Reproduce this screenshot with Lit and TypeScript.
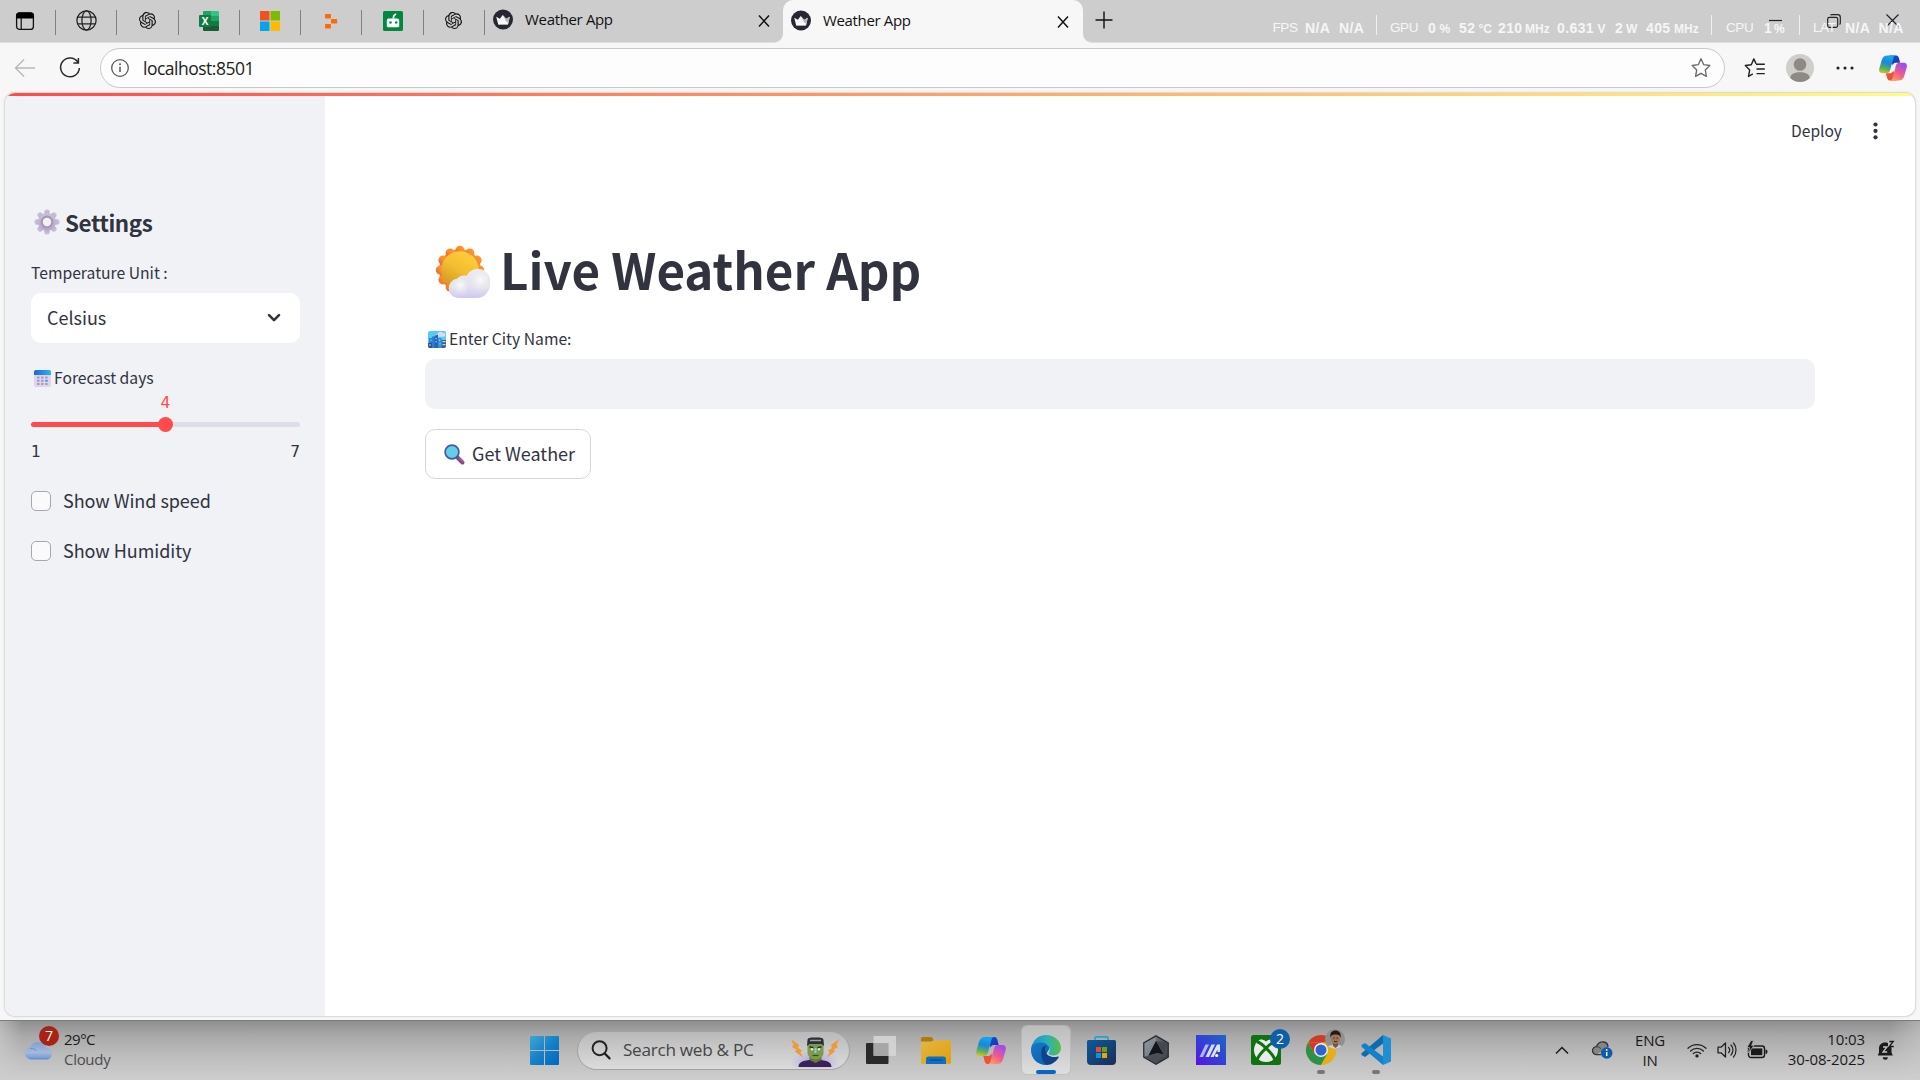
import { LitElement, html, css, svg, nothing } from "lit";
import { customElement } from "lit/decorators.js";

const icon = (w: number, h: number, body: unknown, vb = `0 0 ${w} ${h}`) =>
  html`<svg class="ico" width=${w} height=${h} viewBox=${vb} fill="none">${body}</svg>`;

const openAi = svg`<path fill="#111" d="M22.2819 9.8211a5.9847 5.9847 0 0 0-.5157-4.9108 6.0462 6.0462 0 0 0-6.5098-2.9A6.0651 6.0651 0 0 0 4.9807 4.1818a5.9847 5.9847 0 0 0-3.9977 2.9 6.0462 6.0462 0 0 0 .7427 7.0966 5.98 5.98 0 0 0 .511 4.9107 6.051 6.051 0 0 0 6.5146 2.9001A5.9847 5.9847 0 0 0 13.2599 24a6.0557 6.0557 0 0 0 5.7718-4.2058 5.9894 5.9894 0 0 0 3.9977-2.9001 6.0557 6.0557 0 0 0-.7475-7.0729zm-9.022 12.6081a4.4755 4.4755 0 0 1-2.8764-1.0408l.1419-.0804 4.7783-2.7582a.7948.7948 0 0 0 .3927-.6813v-6.7369l2.02 1.1686a.071.071 0 0 1 .038.052v5.5826a4.504 4.504 0 0 1-4.4945 4.4944zm-9.6607-4.1254a4.4708 4.4708 0 0 1-.5346-3.0137l.142.0852 4.783 2.7582a.7712.7712 0 0 0 .7806 0l5.8428-3.3685v2.3324a.0804.0804 0 0 1-.0332.0615L9.74 19.9502a4.4992 4.4992 0 0 1-6.1408-1.6464zM2.3408 7.8956a4.485 4.485 0 0 1 2.3655-1.9728V11.6a.7664.7664 0 0 0 .3879.6765l5.8144 3.3543-2.0201 1.1685a.0757.0757 0 0 1-.071 0l-4.8303-2.7865A4.504 4.504 0 0 1 2.3408 7.872zm16.5963 3.8558L13.1038 8.364 15.1192 7.2a.0757.0757 0 0 1 .071 0l4.8303 2.7913a4.4944 4.4944 0 0 1-.6765 8.1042v-5.6772a.79.79 0 0 0-.407-.667zm2.0107-3.0231l-.142-.0852-4.7735-2.7818a.7759.7759 0 0 0-.7854 0L9.409 9.2297V6.8974a.0662.0662 0 0 1 .0284-.0615l4.8303-2.7866a4.4992 4.4992 0 0 1 6.6802 4.66zM8.3065 12.863l-2.02-1.1638a.0804.0804 0 0 1-.038-.0567V6.0742a4.4992 4.4992 0 0 1 7.3757-3.4537l-.142.0805L8.704 5.459a.7948.7948 0 0 0-.3927.6813zm1.0976-2.3654l2.602-1.4998 2.6069 1.4998v2.9994l-2.5974 1.4997-2.6067-1.4997Z"/>`;

const tabActions = icon(20, 20, svg`<rect x="1.6" y="2" width="16.8" height="16.4" rx="3" stroke="#111" stroke-width="1.3"/><path d="M1 7.6V4.6A3 3 0 0 1 4 1.6h12a3 3 0 0 1 3 3v3z" fill="#000"/><path d="M6.2 7v11" stroke="#111" stroke-width="1.2"/>`);
const globe = icon(21, 21, svg`<g stroke="#222" stroke-width="1.25"><circle cx="10.5" cy="10.5" r="9.6"/><ellipse cx="10.5" cy="10.5" rx="4.6" ry="9.6"/><path d="M1.8 7.1h17.4M1.8 13.9h17.4"/></g>`);
const gpt = icon(17, 17, openAi, "0 0 24 24");
const excel = icon(20, 20, svg`<path d="M5 0h8v6H4V1a1 1 0 0 1 1-1z" fill="#21a366"/><path d="M12 0h7a1 1 0 0 1 1 1v5h-8z" fill="#33c481"/><path d="M4 5h8v5H4z" fill="#107c41"/><path d="M12 5h8v5h-8z" fill="#21a366"/><path d="M4 10h8v5H4z" fill="#185c37"/><path d="M12 10h8v5h-8z" fill="#107c41"/><path d="M4 15h16v4a1 1 0 0 1-1 1H5a1 1 0 0 1-1-1z" fill="#185c37"/><rect y="4" width="12" height="12" rx="1" fill="#107c41"/><text x="6" y="13.6" text-anchor="middle" font-family="Open Sans, sans-serif" font-weight="700" font-size="10" fill="#fff">X</text>`);
const msLogo = icon(20, 20, svg`<path d="M0 0h9.5v9.5H0z" fill="#f25022"/><path d="M10.5 0H20v9.5h-9.5z" fill="#7fba00"/><path d="M0 10.5h9.5V20H0z" fill="#00a4ef"/><path d="M10.5 10.5H20V20h-9.5z" fill="#ffb900"/>`);
const replit = icon(14, 16, svg`<g fill="#fb6a0e"><rect x="1" y="1" width="6" height="4.4" rx=".7"/><rect x="7" y="6" width="6.2" height="4.4" rx=".7"/><rect x="1" y="11" width="6" height="4.4" rx=".7"/></g>`);
const bot = icon(20, 20, svg`<rect width="20" height="20" rx="1.6" fill="#00893e"/><path d="M5.800 7.600h8.600a1.800 1.800 0 0 1 1.800 1.800V15c0 .8-.4 1.200-1.200 1.200H5c-.8 0-1.200-.4-1.200-1.200V9.400a1.800 1.800 0 0 1 2-1.800z" fill="#fff"/><path d="M10.300 7.600c0-2.600.8-4 2.900-4.600" stroke="#fff" stroke-width="1.700"/><circle cx="7.500" cy="11.400" r="1.250" fill="#00893e"/><circle cx="13.200" cy="11.400" r="1.250" fill="#00893e"/>`);
const crown = icon(20, 21, svg`<circle cx="10" cy="10.500" r="10" fill="#262730"/><path d="M3.200 7.800l3.600 2L9.800 6l3.300 3.800 3.700-2-1.800 7.800H5.200z" fill="#f4f4f4"/><path d="M9.800 6l3.300 3.800 3.700-2L15 15.600z" fill="#b5b5ba"/><path d="M5 13h10.200l-.5 2.600H5.200z" fill="#fff" fill-opacity=".6"/>`);
const cross = icon(12, 12, svg`<path d="M1 .5l10 11M11 .5L1 11.500" stroke="#111" stroke-width="1.500"/>`);
const plus = icon(18, 18, svg`<path d="M9 .5v17M.5 9h17" stroke="#111" stroke-width="1.400"/>`);

const back = icon(22, 20, svg`<path d="M21 10H1.500M10 1.500L1.500 10l8.500 8.500" stroke="#b9b9b9" stroke-width="1.400"/>`);
const reload = icon(22, 22, svg`<path d="M18.800 5.100A9.400 9.400 0 1 0 20.400 11M19.400 1v5h-5" stroke="#2a2a2a" stroke-width="1.500"/>`);
const info = icon(20, 20, svg`<circle cx="10" cy="10" r="8.300" stroke="#5a5a5a" stroke-width="1.300"/><path d="M10 8.800v5.200" stroke="#555" stroke-width="1.500"/><circle cx="10" cy="6.300" r="1" fill="#555"/>`);
const star = icon(20, 20, svg`<path d="M10 .8l2.700 5.900 6.100.8-4.500 4.400 1.100 6.500L10 15.300l-5.400 3.100 1.100-6.500L1.200 7.500l6.100-.8z" stroke="#6a6a6a" stroke-width="1.350" stroke-linejoin="round"/>`);
const starList = icon(22, 20, svg`<path d="M12 5.600L9.800 .9 7.300 6.700l-6 .8 4.400 4.400-1.200 6.600 4.300-2.700M12 6.300h8.800M12.500 11h8.300M12.500 15.600h8.300" stroke="#222" stroke-width="1.400" stroke-linejoin="round"/>`);
const avatar = icon(28, 28, svg`<circle cx="14" cy="14" r="14" fill="#d0ceca"/><circle cx="14" cy="10.500" r="6.300" fill="#8d8985"/><path d="M4.200 24c.6-4.200 4.500-5.700 9.800-5.700s9.200 1.500 9.800 5.700A14 14 0 0 1 14 28a14 14 0 0 1-9.800-4z" fill="#8d8985"/>`);
const more = icon(18, 4, svg`<g fill="#222"><circle cx="2" cy="2" r="1.550"/><circle cx="9" cy="2" r="1.550"/><circle cx="16" cy="2" r="1.550"/></g>`);
const copilot = (id: string, w: number, h: number) => icon(w, h, svg`
  <defs>
    <linearGradient id="${id}a" x1="10" y1="2" x2="5" y2="22" gradientUnits="userSpaceOnUse"><stop stop-color="#1ba0ea"/><stop offset=".3" stop-color="#1687dd"/><stop offset=".62" stop-color="#5fae5a"/><stop offset=".95" stop-color="#f7cd15"/></linearGradient>
    <linearGradient id="${id}b" x1="26" y1="10" x2="15" y2="28" gradientUnits="userSpaceOnUse"><stop stop-color="#a34de8"/><stop offset=".5" stop-color="#ee5c8d"/><stop offset="1" stop-color="#ffa65a"/></linearGradient>
    <linearGradient id="${id}c" x1="16" y1="0" x2="21" y2="10" gradientUnits="userSpaceOnUse"><stop stop-color="#0b4ec7"/><stop offset="1" stop-color="#1a36bd"/></linearGradient>
  </defs>
  <path d="M11 0h7.500c1.500 0 2.400 1.300 2.900 3l1.300 5h-5c-1.800 0-2.400 1-2.900 2.700z" fill="url(#${id}c)"/>
  <path d="M19 27h-7.500c-1.500 0-2.400-1.300-2.900-3l-1.300-5h5c1.800 0 2.400-1 2.900-2.700z" fill="#ee5138"/>
  <path d="M9.200 0h8.600c-1.600.4-2.100 1.800-2.700 4L12 15.600c-.6 2.200-1.600 3.400-4 3.400H3.800C.600 19-.4 16.800.300 14L3 4.800C4 1.500 6 0 9.200 0z" fill="url(#${id}a)"/>
  <path d="M20.800 27h-8.600c1.600-.4 2.100-1.800 2.700-4L18 11.400c.6-2.200 1.600-3.400 4-3.400h4.200c3.200 0 4.200 2.200 3.500 5L27 22.200c-1 3.300-3 4.800-6.200 4.800z" fill="url(#${id}b)"/>`, "0 0 30 27");

const minimise = icon(13, 13, svg`<path d="M0 6.500h13" stroke="#222" stroke-width="1.200"/>`);
const restore = icon(14, 14, svg`<rect x=".7" y="3.300" width="10" height="10" rx="1.800" stroke="#222" stroke-width="1.200"/><path d="M3.500 1.200c.3-.4.800-.6 1.500-.6h5.600a2.700 2.700 0 0 1 2.700 2.700V9c0 .7-.3 1.200-.8 1.500" stroke="#222" stroke-width="1.200"/>`);
const winClose = icon(13, 13, svg`<path d="M.5.5l12 12M12.500.5l-12 12" stroke="#222" stroke-width="1.200"/>`);

const gear = icon(26, 26, svg`
  <defs><linearGradient id="gg" x1="0" y1="0" x2="0" y2="1"><stop stop-color="#cbc3d6"/><stop offset="1" stop-color="#b9a5d3"/></linearGradient></defs>
  <g fill="url(#gg)">${[0, 45, 90, 135, 180, 225, 270, 315].map((a) => svg`<rect x="10.300" y=".5" width="5.400" height="7" rx="2.500" transform="rotate(${a} 13 13)"/>`)}<circle cx="13" cy="13" r="9"/></g>
  <circle cx="13" cy="13" r="5.200" stroke="#a59bb0" stroke-width="2.400"/><circle cx="13" cy="13" r="4.200" fill="#f0f2f6"/>`);
const chevron = icon(14, 10, svg`<path d="M2 2.200l5 5 5-5" stroke="#31333f" stroke-width="2.600" stroke-linecap="round" stroke-linejoin="round"/>`);
const calendar = icon(17, 17, svg`
  <defs><linearGradient id="cal" x1="0" x2="1"><stop stop-color="#1668dc"/><stop offset="1" stop-color="#2fb0fb"/></linearGradient></defs>
  <rect width="17" height="17" rx="2" fill="#e0d3ee"/><path d="M0 5V2a2 2 0 0 1 2-2h13a2 2 0 0 1 2 2v3z" fill="url(#cal)"/>
  ${[6.6, 9.8, 13].map((y, r) => [3, 7, 11.2].map((x, c) => svg`<rect x=${x} y=${y} width="2.500" height="2" rx=".4" fill=${r === 1 && c === 2 ? "#3b9cf0" : "#a79ab5"}/>`))}`);
const sunCloud = icon(56, 54, svg`
  <defs>
    <linearGradient id="ray" x1="1" y1="0" x2="0" y2="1"><stop stop-color="#ff9d2e"/><stop offset=".5" stop-color="#fb8a2c"/><stop offset="1" stop-color="#e0633a"/></linearGradient>
    <linearGradient id="sun" x1=".8" y1="0" x2=".2" y2="1"><stop stop-color="#ffd03c"/><stop offset=".5" stop-color="#f3bd31"/><stop offset="1" stop-color="#cf9522"/></linearGradient>
    <linearGradient id="cld" x1=".5" y1="0" x2=".5" y2="1"><stop stop-color="#ececf0"/><stop offset=".6" stop-color="#e4e2ec"/><stop offset="1" stop-color="#cfc6f2"/></linearGradient>
    <radialGradient id="puff" cx=".6" cy=".35" r=".7"><stop stop-color="#fafafc"/><stop offset="1" stop-color="#dddbe4" stop-opacity="0"/></radialGradient>
  </defs>
  <g fill="url(#ray)"><circle cx="25" cy="25" r="21"/>${Array.from({ length: 12 }, (_, i) => svg`<circle cx=${(25 + 19.6 * Math.sin((i * Math.PI) / 6)).toFixed(1)} cy=${(25 - 19.6 * Math.cos((i * Math.PI) / 6)).toFixed(1)} r="4.600"/>`)}</g>
  <circle cx="25" cy="25" r="18.800" fill="url(#sun)"/>
  <path d="M23 53a9.700 9.700 0 0 1-1-19.300 10 10 0 0 1 9.500-3A12.500 12.500 0 0 1 55 38.500c0 8-5.500 14.500-13 14.500z" fill="url(#cld)"/>
  <circle cx="43" cy="38.500" r="12" fill="url(#puff)"/><circle cx="23.500" cy="43" r="9.500" fill="url(#puff)"/>`);
const city = icon(18, 17, svg`
  <rect width="18" height="17" rx="2" fill="#56ccf4"/><path d="M8 4.500a2 2 0 0 1 2-2 2.500 2.500 0 0 1 4.500-.5 2 2 0 0 1 1.500 3.800H9.500z" fill="#dcd8fa"/>
  <path d="M1 7h3V5.500h3V17H1z" fill="#2f7dcc"/><path d="M6.500 5l3.500-1.500V17H6.500z" fill="#2465b8"/><path d="M10 7h3.500v10H10z" fill="#3a8edc"/><path d="M13.500 9H18v6a2 2 0 0 1-2 2h-2.500z" fill="#2b5fb0"/><path d="M0 12h4v5H2a2 2 0 0 1-2-2z" fill="#1f56a8"/>
  <path d="M14.500 10h3v1.300h-3zM14.500 13h3v1.300h-3zM1 13.500h2v1H1z" fill="#f5d85c"/><path d="M7.500 7h1.300v1.300H7.500zM7.500 10h1.300v1.300H7.500zM11 8.500h1V10h-1zM11.500 12h1v1.500h-1zM2.500 8.500h1V10h-1z" fill="#7ed6f8"/>`);
const lens = icon(21, 21, svg`<path d="M13.500 13.500l5 5" stroke="#83437f" stroke-width="4" stroke-linecap="round"/><path d="M15 14l4 4" stroke="#a8629d" stroke-width="1.400" stroke-linecap="round"/><circle cx="8" cy="8" r="6.900" fill="#64cdea" stroke="#46599a" stroke-width="1.700"/>`);
const kebab = icon(5, 18, svg`<g fill="#31333f"><circle cx="2.500" cy="2.500" r="2.100"/><circle cx="2.500" cy="8.900" r="2.100"/><circle cx="2.500" cy="15.300" r="2.100"/></g>`);

const cloud = icon(30, 21, svg`
  <defs><linearGradient id="wc" x1="0" y1="0" x2="0" y2="1"><stop stop-color="#7f9fd4"/><stop offset=".6" stop-color="#a5badb"/><stop offset="1" stop-color="#6f93d6"/></linearGradient></defs>
  <path d="M6.500 20.500a6.200 6.200 0 0 1-.5-12.300A9 9 0 0 1 22.500 8.500a6.300 6.300 0 0 1 1.500 12z" fill="url(#wc)"/><path d="M6 9.500c3-.5 5 .5 6.500 2.500M6.500 19.600h17" stroke="#6c8fd0" stroke-width="1"/>`);
const startLogo = icon(29, 29, svg`<defs><linearGradient id="st" x1="0" y1="0" x2="29" y2="29" gradientUnits="userSpaceOnUse"><stop stop-color="#3da7d6"/><stop offset=".5" stop-color="#1581c6"/><stop offset="1" stop-color="#0067c0"/></linearGradient></defs><path fill="url(#st)" d="M1 0h13v14H0V1a1 1 0 0 1 1-1zM15 0h13a1 1 0 0 1 1 1v13H15zM0 15h14v14H1a1 1 0 0 1-1-1zM15 15h14v13a1 1 0 0 1-1 1H15z"/>`);
const magnifier = icon(20, 20, svg`<circle cx="8.600" cy="8.200" r="7" stroke="#222" stroke-width="2"/><path d="M13.600 13.400l5 5" stroke="#222" stroke-width="2.200" stroke-linecap="round"/>`);
const monster = icon(52, 32, svg`
  <defs><radialGradient id="glow" cx=".5" cy=".5" r=".5"><stop stop-color="#8f7df0" stop-opacity=".75"/><stop offset="1" stop-color="#a79cf0" stop-opacity="0"/></radialGradient><clipPath id="mc"><path d="M0 0h52v31.500H0z"/></clipPath></defs>
  <g clip-path="url(#mc)"><ellipse cx="26" cy="27" rx="25" ry="13" fill="url(#glow)"/></g>
  <path d="M2 3l8 6-1 3 4 2.500-1.500 2 2.500 5-8-6 1.500-2-4.500-2.500 1.500-2z" fill="#ee9a35"/><path d="M50 3l-8 6 1 3-4 2.500 1.500 2-2.500 5 8-6-1.500-2 4.500-2.500-1.500-2z" fill="#ee9a35"/>
  <path d="M9.500 31c0-3.800 3-5.800 6.500-6.300l4-.7h12l4 .7c3.500.5 6.500 2.500 6.500 6.300z" fill="#3a2159"/>
  <path d="M20.500 19h12v5l-6 3-6-3z" fill="#5f7d33"/><path d="M18.500 8h16v9c0 3.500-4 6.500-8 6.500s-8-3-8-6.500z" fill="#7f9a4c"/>
  <path d="M18 10l.5-6c.2-2 2-2.500 8-2.500s7.800.5 8 2.500l.5 6-2.500-2h-12z" fill="#28303a"/><path d="M21 4.500h11" stroke="#9aa5a8" stroke-width="1.500"/>
  <path d="M20.500 10.800l4 1M32.500 10.800l-4 1" stroke="#28303a" stroke-width="1.400"/><circle cx="23" cy="13.300" r="1.200" fill="#e8e7d8"/><circle cx="30" cy="13.300" r="1.200" fill="#e8e7d8"/><path d="M26.500 12v5" stroke="#7fd0e0" stroke-width="2"/><path d="M23.500 19.500h6" stroke="#3a4a25" stroke-width="1.200"/>`);
const taskView = icon(30, 28, svg`<rect x="0" y="7" width="22.500" height="21" rx="1" fill="#2a2a2a"/><rect x="7.500" y="0" width="22.500" height="20" rx="1" fill="#d6d6d6" fill-opacity=".88"/><path d="M7.500 7h15v13h-15z" fill="#9d9d9d" fill-opacity=".75"/>`);
const folder = icon(30, 27, svg`<defs><linearGradient id="fo" x1="0" y1="0" x2="1" y2="1"><stop stop-color="#e5b544"/><stop offset="1" stop-color="#e0a008"/></linearGradient></defs><path d="M0 1.500A1.500 1.500 0 0 1 1.500 0h8c1.500 0 2 .8 2.500 2l1 2.500H0z" fill="#b27a08"/><path d="M0 5h10l2.500-1.800H29a1 1 0 0 1 1 1V26a.8.8 0 0 1-.8.800H1A1 1 0 0 1 0 26z" fill="url(#fo)"/><path d="M5 27v-5a2.500 2.500 0 0 1 2.500-2.500h15A2.500 2.500 0 0 1 25 22v5z" fill="#0f6fc0"/><path d="M8.500 23h13" stroke="#0c4b92" stroke-width="1.200"/>`);
const edge = icon(30, 30, svg`
  <defs>
    <linearGradient id="e1" x1="3" y1="10" x2="29" y2="10" gradientUnits="userSpaceOnUse"><stop stop-color="#2191cf"/><stop offset=".5" stop-color="#2bb0b8"/><stop offset="1" stop-color="#57bd4a"/></linearGradient>
    <linearGradient id="e2" x1="0" y1="10" x2="14" y2="28" gradientUnits="userSpaceOnUse"><stop stop-color="#1478c4"/><stop offset="1" stop-color="#0c62b2"/></linearGradient>
  </defs>
  <path d="M15 30C6.500 30 0 23.500 0 15c0-2 .5-4 1.300-5.500C4 6.500 8 5.500 12 6.500c4 1 6.500 4 6.500 7l-3.500 6 5 8z" fill="url(#e2)"/>
  <path d="M10.500 15.500C10.500 12 13 10.500 15.500 11c-1.500 1-2 3-1 5.500 1.300 4 6 6.700 12.500 5 .5-.1 1 .3.700.8C25 27 20.500 30 16 30c-4.500-2-6-8-5.500-14.500z" fill="#10428c"/>
  <path d="M1 10.500C3 4 8.500 0 15 0c8.500 0 15 6 15 13 0 4.500-3.500 7.500-7.500 7.500-3.500 0-5-1.200-5-2.200 0-.8 1.200-1.300 1.200-3.800 0-3.500-3.700-7-9-7C5.500 7.500 2.500 9 1 10.500z" fill="url(#e1)"/>`);
const store = icon(29, 29, svg`<defs><linearGradient id="so" x1="0" y1="0" x2="1" y2="1"><stop stop-color="#0b5a9d"/><stop offset="1" stop-color="#1d2c54"/></linearGradient></defs><path d="M8 6V2a1.200 1.200 0 0 1 1.200-1.200h10.600A1.200 1.200 0 0 1 21 2v4" stroke="#24a3c8" stroke-width="1.700"/><path d="M0 5.500A1.500 1.500 0 0 1 1.500 4h26A1.500 1.500 0 0 1 29 5.500V25a4 4 0 0 1-4 4H4a4 4 0 0 1-4-4z" fill="url(#so)"/><path d="M9 11h5v5H9z" fill="#e0502c"/><path d="M15 11h5v5h-5z" fill="#6fa00c"/><path d="M9 17h5v5H9z" fill="#1292d4"/><path d="M15 17h5v5h-5z" fill="#e8a60c"/>`);
const armoury = icon(26, 30, svg`<defs><linearGradient id="ar" x1="0" y1="0" x2="1" y2="1"><stop stop-color="#8d949c"/><stop offset=".5" stop-color="#545a61"/><stop offset="1" stop-color="#3a3e44"/></linearGradient></defs><path d="M13 .8l12.200 7v14.400L13 29.200.8 22.200V7.800z" fill="url(#ar)" stroke="#2b2e32" stroke-width="1.400"/><path d="M13 2v4L5.500 20.500 1.500 21.500V8.300z" fill="#98a0a8" fill-opacity=".55"/><path d="M13 6l7.500 13.500-6-1.500L5.500 20.500z" fill="#131518"/><path d="M5.500 20.500l9-2.500 6 1.500L13 28.400 2 22z" fill="#4a4f55"/><path d="M13 6l7.500 13.500 4-12z" fill="#3e434a" fill-opacity=".7"/>`);
const myAsus = icon(30, 30, svg`<defs><linearGradient id="ma" x1="1" y1="0" x2="0" y2="1"><stop stop-color="#1f66c4"/><stop offset=".5" stop-color="#3340d6"/><stop offset="1" stop-color="#5a10e6"/></linearGradient></defs><path d="M0 0h30v30H0z" fill="url(#ma)"/><path d="M3.500 22L9.500 9.500H13L7 22z" fill="#a9b8f0"/><path d="M9.500 22l6-12.500H19L13 22z" fill="#d5def8"/><path d="M14.500 22l6.500-12.500h3V17h-2.500v-2.500L17.500 22z" fill="#dfe6fa"/><circle cx="20.700" cy="20.500" r="1.600" fill="#fff"/>`);
const xbox = icon(30, 30, svg`<rect width="30" height="30" rx="2.500" fill="#107210"/><circle cx="15" cy="15" r="12" fill="#ebebeb"/><path d="M8.500 4.400C11 4 13.200 5.200 15 6.500c1.800-1.300 4-2.500 6.500-2.100A12 12 0 0 0 15 2.500a12 12 0 0 0-6.500 1.900z" fill="#107210"/><path d="M5.800 6.800C9 7.500 13 11 15 13.200c2-2.200 6-5.700 9.200-6.400M15 13.200C10.500 17.500 7 21.500 6.300 24.500M15 13.200c4.500 4.300 8 8.300 8.700 11.300" stroke="#107210" stroke-width="3"/>`);
const chrome = icon(30, 30, svg`<circle cx="15" cy="15" r="15" fill="#e8ae16"/><path d="M2 7.500A15 15 0 0 1 28 7.500H15z" fill="#cf3a2e"/><path d="M2 7.500A15 15 0 0 0 15 30l6.500-11.200L15 15 8.500 18.800z" fill="#2c9148"/><path d="M2 7.500l6.500 11.300L15 7.500z" fill="#cf3a2e"/><path d="M28 7.500H15l6.500 11.300L15 30A15 15 0 0 0 28 7.500z" fill="#e8ae16"/><circle cx="15" cy="15" r="7" fill="#eee"/><circle cx="15" cy="15" r="5.500" fill="#2b66d0"/>`);
const face = icon(20, 20, svg`<defs><clipPath id="fc"><circle cx="10" cy="10" r="10"/></clipPath></defs><g clip-path="url(#fc)"><path d="M0 0h20v20H0z" fill="#8f8f8d"/><path d="M0 20c1-3 4-4 10-4s9 1 10 4z" fill="#cfcfcf"/><path d="M8 13h5v4l-2.500 2L8 17z" fill="#7a5642"/><ellipse cx="10.500" cy="9.500" rx="4.300" ry="5.600" fill="#a07358"/><path d="M5.500 9C4.500 3.500 7 1.500 10.500 1.500S16.500 4 15.500 9c-.5-2.500-1.500-3.500-5-3.500S6 6.500 5.500 9z" fill="#211a18"/><path d="M8 9h1.500M11.500 9H13M9 12.500h3" stroke="#3a241b" stroke-width=".9"/></g>`);
const vscode = icon(30, 30, svg`<path d="M22 0l8 3.500v23L22 30z" fill="#1f8fd4"/><path d="M22 0v8.500L4 22 .5 20v-1.800z" fill="#0c6cae"/><path d="M22 30v-8.500L4 8 .5 10v1.800z" fill="#1480c8"/>`);

const caret = icon(14, 9, svg`<path d="M1 7.500l6-6 6 6" stroke="#1a1a1a" stroke-width="1.500"/>`);
const oneDrive = icon(21, 18, svg`<path d="M4.500 13.500a4 4 0 0 1 0-8A6.500 6.500 0 0 1 15.500 4c.6 1 .6 2 .5 3" fill="#858585"/><path d="M9 13.600H4.600a4 4 0 0 1-.2-8C6 1.800 9 .8 11.500 1c2.500.2 4.300 2 4.500 5" stroke="#333" stroke-width="1.300"/><path d="M4.500 5.700c2 0 3 .8 4.500 2" stroke="#444" stroke-width="1"/><circle cx="14.700" cy="12" r="5.800" fill="#0a5cad"/><path d="M14.700 11v4" stroke="#fff" stroke-width="1.500"/><circle cx="14.700" cy="8.900" r=".9" fill="#fff"/>`);
const wifi = icon(20, 15, svg`<g stroke="#222" stroke-width="1.300" stroke-linecap="round"><path d="M1 5.300a13 13 0 0 1 18 0M3.600 8a9.300 9.300 0 0 1 12.800 0M6.300 10.600a5.600 5.600 0 0 1 7.400 0"/></g><circle cx="10" cy="12.900" r="1.700" fill="#222"/>`);
const speaker = icon(20, 18, svg`<path d="M1 6.200h3L8.500 2v14L4 11.800H1z" stroke="#222" stroke-width="1.300" stroke-linejoin="round"/><path d="M11.500 6.300a4 4 0 0 1 0 5.400M14 4a7.500 7.500 0 0 1 0 10M16.500 2a11 11 0 0 1 0 14" stroke="#222" stroke-width="1.200" stroke-linecap="round"/>`);
const battery = icon(21, 17, svg`<rect x="1.500" y="4" width="16" height="11.500" rx="2.500" stroke="#1a1a1a" stroke-width="1.400"/><rect x="4" y="6.400" width="11.300" height="6.800" fill="#1a1a1a"/><path d="M18.500 7.500c1.300 0 2 .8 2 2.200s-.7 2.200-2 2.200z" fill="#1a1a1a"/><path d="M4-1.500L0 5.500h2.500l-1 5.500L7 3.500H4.600L6.500-1.500z" fill="#1a1a1a" stroke="#a9a9a9" stroke-width=".8"/>`);
const bell = icon(18, 20, svg`<path d="M8 2.500c-3.500 0-6 2.500-6 6v4L.8 15.500h15l-1.300-3v-4C14.500 5 12 2.500 8 2.500z" fill="#1a1a1a"/><path d="M5.800 17.200h5a2.500 2.500 0 0 1-5 0z" fill="#1a1a1a"/><path d="M6 7h4l-4 5h4.200" stroke="#c4c4c4" stroke-width="1.300"/><path d="M11 0h7v7h-7z" fill="#b9b9b9"/><path d="M12.300 1.500h4l-4 5h4.500" stroke="#1a1a1a" stroke-width="1.300"/>`);

const pinned = [globe, gpt, excel, msLogo, replit, bot, gpt];
const stats: Array<[string, string, number]> = [
  ["l", "FPS", 32.5], ["v", "N/A", 34], ["v", "N/A", 36.5], ["s", "", 14.5],
  ["l", "GPU", 38], ["v", "0", 11.5], ["u", "%", 19.5], ["v", "52", 19.5], ["u", "°C", 19.5], ["v", "210", 27], ["u", "MHz", 32],
  ["v", "0.631", 40.5], ["u", "V", 17.5], ["v", "2", 11], ["u", "W", 20], ["v", "405", 28], ["u", "MHz", 36.5], ["s", "", 15.5],
  ["l", "CPU", 38], ["v", "1", 10], ["u", "%", 24.5], ["s", "", 14.5], ["l", "LAT", 32], ["v", "N/A", 33.5], ["v", "N/A", 30],
];

interface TaskItem { art: unknown; on?: boolean; running?: boolean; badge?: string; face?: boolean }
const tasks: TaskItem[] = [
  { art: taskView }, { art: folder }, { art: copilot("t", 30, 27) }, { art: edge, on: true }, { art: store },
  { art: armoury }, { art: myAsus }, { art: xbox, badge: "2" }, { art: chrome, running: true, face: true }, { art: vscode, running: true },
];

@customElement("app-root")
export class AppRoot extends LitElement {
  static styles = css`
    :host { display: flex; flex-direction: column; width: 1920px; height: 1080px; overflow: hidden; background: #f7f7f7; font-family: "Open Sans", "Liberation Sans", sans-serif; color: #1a1a1a; }
    * { box-sizing: border-box; }
    .ico { display: block; flex: none; overflow: visible; }
    span { white-space: nowrap; }

    .strip { position: relative; display: flex; height: 43px; flex: none; background: #f7f7f7; }
    .left, .right { background: #cdcdcd; border-bottom: 1px solid #dedede; display: flex; align-items: center; height: 43px; padding-bottom: 1px; }
    .left { width: 783px; border-bottom-right-radius: 9px; }
    .right { flex: 1; border-bottom-left-radius: 9px; padding: 0 0 2px 12px; }
    .active-wrap { width: 300px; height: 43px; background: linear-gradient(#cdcdcd 0 20px, #f7f7f7 20px); }
    .active { height: 43px; background: #f7f7f7; border-radius: 10px 10px 0 0; }
    .pin { display: flex; flex: none; justify-content: center; align-items: center; width: 61.300px; height: 25px; border-right: 1px solid #808080; margin-top: 3px; padding-bottom: 3px; }
    .pin.first { width: 56px; padding-right: 5px; }
    .tab { display: flex; align-items: center; width: 297px; height: 42px; padding: 0 12px 2px 8px; }
    .tab.on { width: 300px; padding-right: 14px; }
    .tab span { flex: 1; margin-left: 12px; font-size: 15px; line-height: 20px; letter-spacing: -.35px; color: #111; padding-bottom: 1px; }
    .tab .ico:last-child { margin-top: 3px; }
    .overlay { position: absolute; left: 1272.500px; top: 15px; height: 20px; display: flex; align-items: center; color: #f6f6f6; font-family: "Liberation Sans", sans-serif; font-size: 14px; line-height: 20px; padding-top: 6px; }
    .overlay span { flex: none; }
    .overlay .l { font-size: 13.500px; letter-spacing: -.4px; }
    .overlay .v { font-weight: 700; letter-spacing: .4px; }
    .overlay .u { font-weight: 700; font-size: 12px; padding-top: 1px; }
    .overlay .s { height: 20px; border-left: 1.500px solid #f0f0f0; margin-top: -6px; }
    .window { position: absolute; left: 1769px; top: 14px; display: flex; gap: 45px; }

    .bar { display: flex; align-items: center; height: 50px; flex: none; padding: 0 14px 0 14px; }
    .bar .reload { margin-left: 23px; }
    .pill { display: flex; flex: none; align-items: center; width: 1625px; height: 40px; margin-left: 19px; border: 1px solid #c9c9c9; border-radius: 20px; background: #fdfdfd; padding: 0 13px 0 9px; }
    .pill span { flex: 1; margin-left: 13px; font-size: 17.500px; line-height: 24px; letter-spacing: -.5px; color: #222; padding-bottom: 1px; }
    .tools { display: flex; flex: 1; align-items: center; padding-left: 19px; }
    .tools .a { margin-left: 20px; } .tools .b { margin-left: 22px; } .tools .c { margin-left: 25px; }

    .page { display: flex; flex-direction: column; height: 923px; margin: 0 5px; flex: none; border-radius: 10px; background: #fff; overflow: hidden; box-shadow: 0 0 0 1px #dcdcdc, 0 0 3px #c8c8c8; font-family: "Noto Sans CJK JP", sans-serif; color: #31333f; }
    .ribbon { height: 3px; flex: none; background: linear-gradient(90deg, #ff4b4b, #fffd80); }
    .cols { display: flex; flex: 1; }
    .side { width: 320px; background: #f0f2f6; padding: 110px 25px 0 26px; display: flex; flex-direction: column; }
    .h { display: flex; align-items: center; gap: 5px; padding-left: 3px; height: 32px; }
    .h span { font-size: 22.400px; line-height: 32px; font-weight: 600; letter-spacing: -.4px; padding-bottom: 1px; }
    .lab { font-size: 15.700px; line-height: 24px; }
    .lab.unit { margin-top: 23px; }
    .select { display: flex; align-items: center; justify-content: space-between; height: 50px; margin-top: 8px; border-radius: 10px; background: #fff; padding: 0 19px 0 16px; font-size: 18px; line-height: 26px; }
    .select span { padding-bottom: 3px; }
    .row { display: flex; align-items: center; gap: 3px; }
    .days { margin-top: 23px; padding-left: 3px; }
    .val { text-align: center; color: #ff4b4b; font-family: "DejaVu Sans", sans-serif; font-size: 15.500px; line-height: 20px; margin-top: 3px; }
    .track { position: relative; height: 5px; margin-top: 9px; border-radius: 3px; background: linear-gradient(90deg, #ff4b4b 50%, #dadfe8 50%); }
    .thumb { position: absolute; left: 127px; top: -5px; width: 15px; height: 15px; border-radius: 50%; background: #ff4b4b; }
    .ends { display: flex; justify-content: space-between; margin-top: 13px; font-family: "DejaVu Sans", sans-serif; font-size: 15.500px; line-height: 24px; }
    .check { display: flex; align-items: center; gap: 12px; height: 26px; margin-top: 24px; font-size: 18px; line-height: 26px; letter-spacing: -.05px; }
    .check span { padding-bottom: 3px; }
    .box { width: 20px; height: 20px; border: 1px solid #a6a8b0; border-radius: 5px; background: #fafafc; }

    .main { flex: 1; display: flex; flex-direction: column; padding: 0 100px; }
    .head { display: flex; justify-content: flex-end; align-items: center; gap: 31px; margin-right: -63px; height: 70px; font-size: 15.600px; }
    .head span { padding-bottom: 2px; }
    .title { display: flex; align-items: center; gap: 9px; height: 66px; margin-top: 73px; padding-left: 10px; }
    .title h1 { margin: 0; font-size: 49.300px; line-height: 66px; font-weight: 700; white-space: nowrap; padding-bottom: 7px; }
    .cityl { margin-top: 22px; padding-left: 3px; }
    .input { height: 50px; margin-top: 8px; border-radius: 10px; background: #f0f2f6; }
    .btn { display: flex; align-items: center; width: 166px; height: 50px; margin-top: 20px; padding-left: 18px; gap: 7px; border: 1px solid #d6d6d9; border-radius: 10px; font-size: 18px; line-height: 26px; }
    .btn span { padding-bottom: 3px; }

    .task { display: flex; align-items: center; position: relative; height: 60px; flex: none; margin-top: 4px; padding-bottom: 1px; background: linear-gradient(90deg, rgba(205,205,205,.6), rgba(205,205,205,0) 22px 1890px, rgba(205,205,205,.5)), linear-gradient(#8f8f8f, #a9a9a9 25%, #bdbdbd 60%, #cecece); border-top: 1px solid #7b7b7b; font-size: 15px; line-height: 20px; }
    .weather { position: relative; display: flex; flex: none; gap: 10px; align-items: center; width: 517px; padding-left: 24px; letter-spacing: -.5px; }
    .weather .ico { margin-top: -2px; }
    .two { display: flex; flex-direction: column; padding-bottom: 2px; }
    .two .dim { color: #4d4d4d; letter-spacing: -.3px; }
    .badge { position: absolute; width: 20px; height: 20px; border-radius: 50%; color: #fff; font-size: 14px; line-height: 20px; text-align: center; letter-spacing: 0; }
    .badge.red { left: 39px; top: -3px; background: #a82315; }
    .badge.blue { left: 28px; top: 3px; background: #0e5fa8; }
    .badge.pic { left: 28px; top: 3px; }
    .start { width: 60px; flex: none; padding-left: 13px; }
    .search { display: flex; flex: none; align-items: center; width: 273px; height: 39px; border-radius: 20px; border: 1px solid #a2a2a2; background: linear-gradient(#b9b9b9, #dcdcdc); padding: 0 8px 0 13px; font-size: 17.200px; color: #454545; letter-spacing: -.3px; }
    .search span { flex: 1; margin-left: 12px; }
    .search .ico:last-child { margin-top: 4px; }
    .apps { display: flex; flex: none; margin-left: 7px; }
    .app { position: relative; display: flex; align-items: center; justify-content: center; width: 48px; height: 48px; margin-right: 7px; border-radius: 5px; }
    .app.sel { background: linear-gradient(#bdbdbd, #dedede); box-shadow: 0 0 0 1px rgba(190,190,190,.7); }
    .mark { position: absolute; bottom: 0; left: 14px; width: 20px; height: 4px; border-radius: 2px; background: #0568c4; }
    .mark.idle { left: 20px; width: 8px; background: #767676; }
    .tray { display: flex; align-items: center; margin-left: auto; padding-right: 25px; }
    .tray .od { margin-left: 23px; } .tray .lang { margin-left: 22px; width: 30px; text-align: center; letter-spacing: -.2px; padding-bottom: 0; }
    .tray .wf { margin-left: 22px; } .tray .sp { margin-left: 10px; } .tray .bt { margin-left: 10px; }
    .tray .clock { width: 97px; text-align: right; letter-spacing: -.1px; } .tray .bl { margin-left: 12px; }
  `;

  private tab(on: boolean) {
    return html`<div class="tab ${on ? "on" : ""}">${crown}<span>Weather App</span>${cross}</div>`;
  }

  private app(t: TaskItem) {
    return html`<div class="app ${t.on ? "sel" : ""}">${t.art}
      ${t.badge ? html`<span class="badge blue">${t.badge}</span>` : nothing}
      ${t.face ? html`<div class="badge pic">${face}</div>` : nothing}
      ${t.on ? html`<div class="mark"></div>` : nothing}${t.running ? html`<div class="mark idle"></div>` : nothing}
    </div>`;
  }

  render() {
    return html`
      <div class="strip">
        <div class="left"><div class="pin first">${tabActions}</div>${pinned.map((p) => html`<div class="pin">${p}</div>`)}${this.tab(false)}</div>
        <div class="active-wrap"><div class="active">${this.tab(true)}</div></div>
        <div class="right">${plus}</div>
        <div class="window">${minimise}${restore}${winClose}</div>
        <div class="overlay">${stats.map(([k, t, w]) => html`<span class=${k} style="width:${w}px">${t}</span>`)}</div>
      </div>
      <div class="bar">
        ${back}<div class="reload">${reload}</div>
        <div class="pill">${info}<span>localhost:8501</span>${star}</div>
        <div class="tools">${starList}<div class="a">${avatar}</div><div class="b">${more}</div><div class="c">${copilot("b", 28, 26)}</div></div>
      </div>
      <div class="page">
        <div class="ribbon"></div>
        <div class="cols">
          <div class="side">
            <div class="h">${gear}<span>Settings</span></div>
            <span class="lab unit">Temperature Unit :</span>
            <div class="select"><span>Celsius</span>${chevron}</div>
            <div class="row lab days">${calendar}<span>Forecast days</span></div>
            <div class="val">4</div>
            <div class="track"><div class="thumb"></div></div>
            <div class="ends"><span>1</span><span>7</span></div>
            <div class="check"><div class="box"></div><span>Show Wind speed</span></div>
            <div class="check"><div class="box"></div><span>Show Humidity</span></div>
          </div>
          <div class="main">
            <div class="head"><span>Deploy</span>${kebab}</div>
            <div class="title">${sunCloud}<h1>Live Weather App</h1></div>
            <div class="row lab cityl">${city}<span>Enter City Name:</span></div>
            <div class="input"></div>
            <div class="btn">${lens}<span>Get Weather</span></div>
          </div>
        </div>
      </div>
      <div class="task">
        <div class="weather">${cloud}<span class="badge red">7</span><div class="two"><span>29°C</span><span class="dim">Cloudy</span></div></div>
        <div class="start">${startLogo}</div>
        <div class="search">${magnifier}<span>Search web &amp; PC</span>${monster}</div>
        <div class="apps">${tasks.map((t) => this.app(t))}</div>
        <div class="tray">${caret}<div class="od">${oneDrive}</div>
          <div class="two lang"><span>ENG</span><span>IN</span></div>
          <div class="wf">${wifi}</div><div class="sp">${speaker}</div><div class="bt">${battery}</div>
          <div class="two clock"><span>10:03</span><span>30-08-2025</span></div><div class="bl">${bell}</div>
        </div>
      </div>`;
  }
}
